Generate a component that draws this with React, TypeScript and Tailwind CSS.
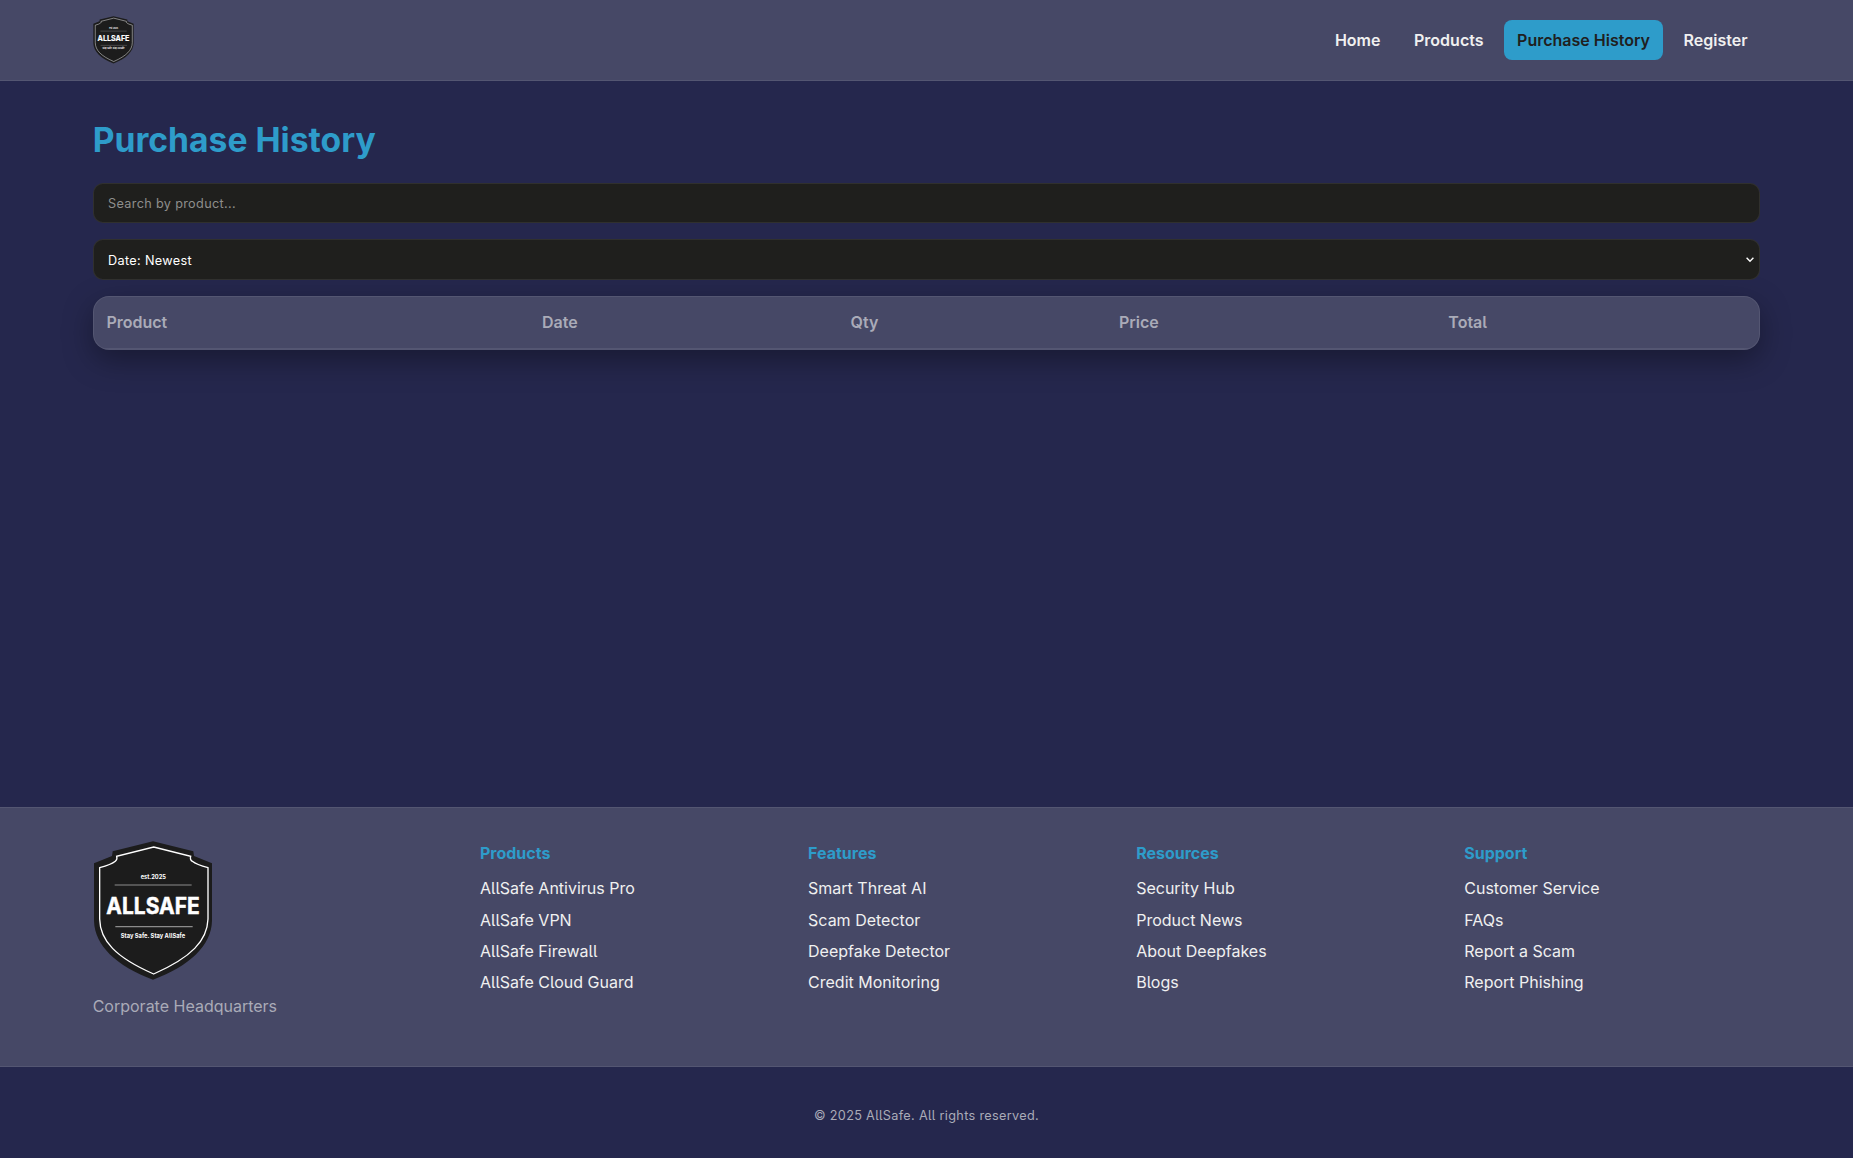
import React from 'react';

function Logo({ className }: { className: string }) {
  return (
    <svg viewBox="0 1 360 420" className={className} role="img" aria-label="AllSafe">
      <path
        d="M180 2 L301 32 L303 46 L357 68 L357 240 C355 315 290 375 180 417 C70 375 5 315 3 240 L3 68 L57 46 L59 32 Z"
        fill="#1c1c1c"
      />
      <path
        d="M182 19 L293 47 Q290 57 298 62 Q310 72 345 81 L345 235 C343 300 295 350 182 400 C68 350 21 300 20 235 L20 81 Q55 72 67 62 Q74 56 71 47 Z"
        fill="none"
        stroke="#fff"
        strokeWidth="4"
      />
      <path d="M65 133 H296 M67 258 H299" stroke="#8b8b8b" strokeWidth="3.5" />
      <g fill="#fff" fontFamily="Inter, sans-serif" textAnchor="middle" fontWeight="700">
        <text x="181" y="114" fontSize="17" textLength="76" lengthAdjust="spacingAndGlyphs">est.2025</text>
        <text x="180" y="221" fontSize="68" textLength="280" lengthAdjust="spacingAndGlyphs" stroke="#fff" strokeWidth="1.5">ALLSAFE</text>
        <text x="180" y="291" fontSize="18" textLength="193" lengthAdjust="spacingAndGlyphs">Stay Safe. Stay AllSafe</text>
      </g>
    </svg>
  );
}

const nav = ['Home', 'Products', 'Purchase History', 'Register'];

const columns = [
  { title: 'Products', links: ['AllSafe Antivirus Pro', 'AllSafe VPN', 'AllSafe Firewall', 'AllSafe Cloud Guard'] },
  { title: 'Features', links: ['Smart Threat AI', 'Scam Detector', 'Deepfake Detector', 'Credit Monitoring'] },
  { title: 'Resources', links: ['Security Hub', 'Product News', 'About Deepfakes', 'Blogs'] },
  { title: 'Support', links: ['Customer Service', 'FAQs', 'Report a Scam', 'Report Phishing'] },
];

export default function App() {
  return (
    <div className="flex min-h-screen flex-col bg-[#25274d] font-['Inter',sans-serif] text-base text-[#f0f0f0] [font-feature-settings:'cv05']">
      <header className="h-[81px] border-b border-white/8 bg-[#464866]">
        <div className="mx-auto flex h-20 w-[90%] items-center justify-between">
          <Logo className="h-12 w-[41px]" />
          <nav className="flex gap-2">
            {nav.map((item) => (
              <a
                key={item}
                href="#"
                className={
                  item === 'Purchase History'
                    ? 'rounded-lg bg-[#2e9cca] px-[12.8px] py-2 font-semibold text-[#20201e]'
                    : 'rounded-lg px-[12.8px] py-2 font-semibold'
                }
              >
                {item}
              </a>
            ))}
          </nav>
        </div>
      </header>

      <main className="mx-auto w-[90%] flex-1 pt-8">
        <h1 className="mb-[18px] mt-[2px] text-[33.66px] font-bold leading-[50px] text-[#2e9cca]">Purchase History</h1>
        <input
          type="text"
          placeholder="Search by product..."
          className="mb-4 block h-10 w-full rounded-[10px] border border-white/8 bg-[#1f1f1d] px-[14.4px] text-[12.7px] tracking-[0.32px] placeholder:text-[#8e8e8c]"
        />
        <div className="relative mb-4">
          <select className="block h-[41px] w-full appearance-none rounded-[10px] border border-white/8 bg-[#1f1f1d] px-[14.4px] pt-0.5 text-[12.7px] tracking-[0.32px] text-white">
            <option>Date: Newest</option>
          </select>
          <svg viewBox="0 0 8 6" className="pointer-events-none absolute right-1.5 top-[18px] h-1.5 w-2" fill="none" stroke="#fff" strokeWidth="1.4">
            <path d="M0.6 0.8 L4 4.2 L7.4 0.8" />
          </svg>
        </div>
        <div className="h-[54px] overflow-hidden rounded-2xl border border-white/8 bg-[#464866] shadow-[0_10px_30px_rgba(0,0,0,0.35)]">
          <div className="grid h-[52px] grid-cols-[435.5px_308.6px_268.4px_329.4px_1fr] items-center border-b border-white/8 pb-0.5 text-left font-semibold text-[#aaabb8]">
            {['Product', 'Date', 'Qty', 'Price', 'Total'].map((h) => (
              <span key={h} className="px-[12.8px]">{h}</span>
            ))}
          </div>
        </div>
      </main>

      <footer>
        <div className="h-[260px] border-y border-white/8 bg-[#464866] pt-[33px]">
          <div className="mx-auto grid w-[90%] grid-cols-[1.2fr_1fr_1fr_1fr_1fr] gap-8">
            <div>
              <Logo className="h-[140px] w-[120px]" />
              <p className="mt-[13px] text-[#aaabb8]">Corporate Headquarters</p>
            </div>
            {columns.map((col) => (
              <div key={col.title}>
                <h4 className="mb-[11.3px] font-bold text-[#2e9cca]">{col.title}</h4>
                <ul className="flex flex-col gap-[7.3px]">
                  {col.links.map((l) => (
                    <li key={l}>
                      <a href="#">{l}</a>
                    </li>
                  ))}
                </ul>
              </div>
            ))}
          </div>
        </div>
        <p className="flex h-[91px] items-center justify-center pt-1.5 text-[12.7px] tracking-[0.32px] text-[#aaabb8]">
          © 2025 AllSafe. All rights reserved.
        </p>
      </footer>
    </div>
  );
}
